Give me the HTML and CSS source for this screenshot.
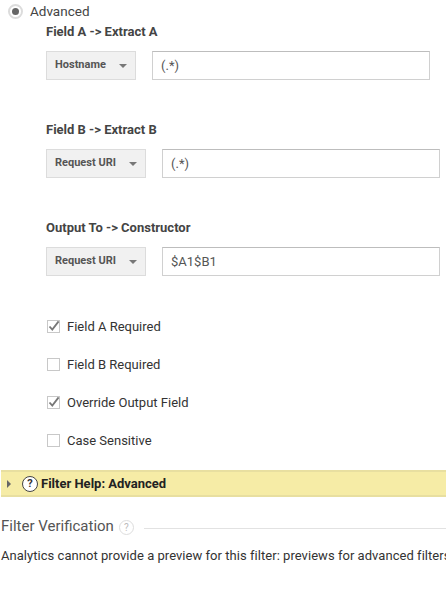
FILE: index.html
```html
<!DOCTYPE html>
<html lang="en">
<head>
  <meta charset="UTF-8" />
  <title>Filter</title>
  <link rel="stylesheet" href="styles.css">
</head>
<body>

<div class="radio-row">
  <span class="radio"><span class="radio-dot"></span></span>
  <span class="radio-label">Advanced</span>
</div>

<div class="fields">
  <div class="field field-a">
    <div class="field-title">Field A -&gt; Extract A</div>
    <div class="field-row">
      <div class="select">Hostname<span class="caret"></span></div>
      <div class="input">(.*)</div>
    </div>
  </div>
  <div class="field">
    <div class="field-title">Field B -&gt; Extract B</div>
    <div class="field-row">
      <div class="select">Request URI<span class="caret"></span></div>
      <div class="input">(.*)</div>
    </div>
  </div>
  <div class="field field-last">
    <div class="field-title">Output To -&gt; Constructor</div>
    <div class="field-row">
      <div class="select">Request URI<span class="caret"></span></div>
      <div class="input">$A1$B1</div>
    </div>
  </div>
</div>

<div class="checks">
  <div class="check-row">
    <span class="checkbox">
      <svg width="13" height="13" viewBox="0 0 13 13"><path d="M2.5 6.5 L5.3 9.6 L11.6 1.4" fill="none" stroke="#777" stroke-width="1.8"/></svg>
    </span>
    Field A Required
  </div>
  <div class="check-row"><span class="checkbox"></span>Field B Required</div>
  <div class="check-row">
    <span class="checkbox">
      <svg width="13" height="13" viewBox="0 0 13 13"><path d="M2.5 6.5 L5.3 9.6 L11.6 1.4" fill="none" stroke="#777" stroke-width="1.8"/></svg>
    </span>
    Override Output Field
  </div>
  <div class="check-row"><span class="checkbox"></span>Case Sensitive</div>
</div>

<div class="help-bar">
  <span class="arrow"></span>
  <span class="help-icon">?</span>
  <span class="help-title">Filter Help: Advanced</span>
</div>

<div class="verify-head">
  <span class="verify-title">Filter Verification</span>
  <span class="verify-icon">?</span>
  <span class="verify-line"></span>
</div>

<div class="verify-text">Analytics cannot provide a preview for this filter: previews for advanced filters</div>

</body>
</html>
```

FILE: styles.css
```css
html, body {
  overflow: hidden;
}
body {
  margin: 0;
  height: 591px;
  font-family: Roboto, "Liberation Sans", sans-serif;
  font-size: 13px;
  color: #333;
  background: #fff;
}

.radio-row {
  display: flex;
  align-items: center;
  height: 22px;
  padding-left: 8px;
}
.radio {
  box-sizing: border-box;
  width: 15px;
  height: 15px;
  border: 2px solid #dcdcdc;
  border-radius: 50%;
  display: flex;
  align-items: center;
  justify-content: center;
  margin-right: 7px;
}
.radio-dot {
  width: 7px;
  height: 7px;
  border-radius: 50%;
  background: #666;
}
.radio-label {
  font-size: 13.5px;
  color: #444;
}

.fields {
  padding-left: 46px;
}
.field {
  height: 98px;
}
.field-last {
  height: 89px;
}
.field-title {
  font-size: 13px;
  font-weight: 700;
  color: #444;
  line-height: 20px;
  margin-bottom: 9px;
}
.field-row {
  display: flex;
  gap: 16px;
}
.select {
  display: flex;
  align-items: center;
  justify-content: space-between;
  box-sizing: border-box;
  height: 29px;
  width: 100px;
  padding: 0 8px 3px 8px;
  background: #f1f1f1;
  border: 1px solid #dcdcdc;
  font-size: 11px;
  font-weight: 700;
  color: #555;
}
.field-a .select {
  width: 90px;
}
.caret {
  width: 0;
  height: 0;
  border-left: 4px solid transparent;
  border-right: 4px solid transparent;
  border-top: 4px solid #777;
  margin-top: 4px;
}
.input {
  box-sizing: border-box;
  height: 29px;
  width: 278px;
  padding: 0 8px;
  line-height: 27px;
  border: 1px solid #d0d0d0;
  border-top-color: #bdbdbd;
  font-size: 13px;
  color: #555;
}

.checks {
  padding-left: 47px;
}
.check-row {
  display: flex;
  align-items: center;
  height: 38px;
  font-size: 13px;
  color: #333;
}
.checkbox {
  box-sizing: border-box;
  width: 13px;
  height: 13px;
  border: 1px solid #c8c8c8;
  margin-right: 7px;
  overflow: visible;
}
.checkbox svg {
  display: block;
  margin: -1px;
}

.help-bar {
  display: flex;
  align-items: center;
  box-sizing: border-box;
  height: 27px;
  margin: 11px 0 0 1px;
  padding-left: 6px;
  background: #f6eca6;
  border-top: 2px solid #e8dfa0;
  border-bottom: 2px solid #e8dfa0;
}
.arrow {
  width: 0;
  height: 0;
  border-top: 4px solid transparent;
  border-bottom: 4px solid transparent;
  border-left: 4px solid #666;
  margin-right: 11px;
}
.help-icon {
  box-sizing: border-box;
  width: 16px;
  height: 16px;
  border: 1.5px solid #444;
  border-radius: 50%;
  background: #fff;
  font-size: 11px;
  font-weight: 700;
  line-height: 13px;
  text-align: center;
  color: #333;
  margin-right: 3px;
}
.help-title {
  font-size: 13px;
  font-weight: 700;
  color: #222;
}

.verify-head {
  display: flex;
  align-items: center;
  height: 30px;
  margin-top: 14px;
  padding-left: 1px;
}
.verify-title {
  font-size: 15px;
  color: #555;
}
.verify-icon {
  box-sizing: border-box;
  width: 15px;
  height: 15px;
  border: 1px solid #ddd;
  border-radius: 50%;
  font-size: 10px;
  line-height: 13px;
  text-align: center;
  color: #bbb;
  margin: 3px 10px 0 5px;
}
.verify-line {
  flex: 1;
  height: 1px;
  margin-top: 5px;
  background: #e2e2e2;
}
.verify-text {
  margin-top: 6px;
  padding-left: 1px;
  white-space: nowrap;
  font-size: 13px;
  letter-spacing: 0.04px;
  line-height: 18px;
  color: #333;
}
```
